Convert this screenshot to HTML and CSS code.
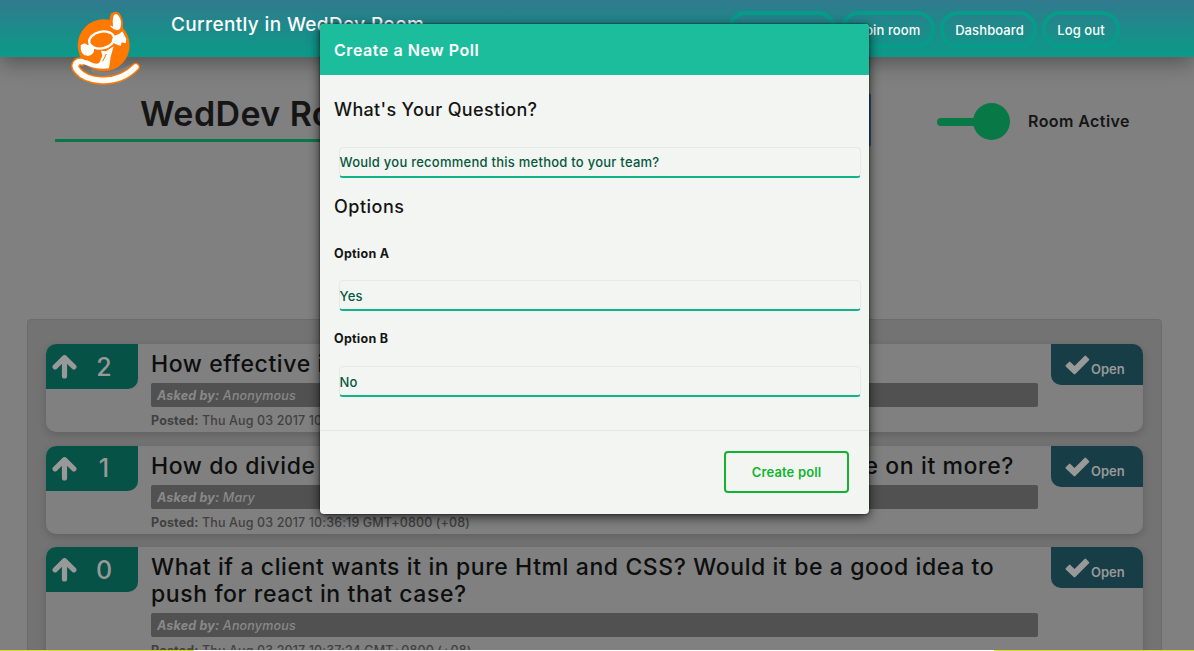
FILE: index.html
```html
<!DOCTYPE html>
<html lang="en">
<head>
<meta charset="utf-8">
<title>WedDev Room</title>
<link rel="stylesheet" href="styles.css">
</head>
<body>
<svg class="defs" width="0" height="0">
  <symbol id="arrow" viewBox="0 0 24 24"><path d="M12 3.500 21 12.300M12 3.500 3 12.300M12 5V21" fill="none" stroke="currentColor" stroke-width="5" stroke-linecap="round" stroke-linejoin="round"/></symbol>
  <symbol id="check" viewBox="0 0 25 20"><path d="M.7 10.2 4 6.9Q4.7 6.2 5.4 6.9L9.5 11 19.5 1Q20.300 .2 21.100 1L24 3.900Q24.700 4.600 24 5.300L10.300 19Q9.500 19.800 8.700 19L.7 11.400Q.2 10.800 .7 10.200Z" fill="currentColor"/></symbol>
</svg>
<header class="topbar">
  <svg class="logo" viewBox="0 0 270 270">
    <circle cx="131" cy="121" r="78" fill="#ff7800"/>
    <path d="M149 38Q151 20 167 20 181 21 187 43 192 64 184 80L165 82 148 68Z" fill="#ff7800"/>
    <path d="M95 190Q120 206 161 198 195 190 211 176L194 205Q145 228 94 202Z" fill="#808080"/>
    <path d="M66 170C50 167 38 181 53 197 66 213 92 224 123 226 166 228 198 216 227 186" fill="none" stroke="#ff7800" stroke-width="26" stroke-linecap="round"/>
    <path d="M70 172Q100 204 150 196L165 160 90 160Z" fill="#ff7800"/>
    <path d="M66 170C50 167 38 181 53 197 66 213 92 224 123 226 166 228 198 216 227 186" fill="none" stroke="#fff" stroke-width="17" stroke-linecap="round"/>
    <path d="M64 166Q80 162 92 171 108 180 118 173L127 152 123 137 138 139 161 124Q149 158 147 190 118 194 94 186L72 178Z" fill="#fff"/>
    <path d="M128 169 139 147" stroke="#ff7800" stroke-width="3"/>
    <ellipse cx="125" cy="105" rx="38" ry="25" transform="rotate(-12 125 105)" fill="none" stroke="#fff" stroke-width="7"/>
    <path d="M97 111 104 101 98 99 117 91 125 96 154 87 150 96 155 100 144 109 126 112 117 119 109 114Z" fill="#ff7800"/>
    <path d="M62 121Q75 110 82 120 99 116 102 126 105 150 84 153 60 153 62 121Z" fill="#fff"/>
    <path d="M160 94 177 87 187 79 199 102 197 115 185 112 182 123 164 116 155 108Z" fill="#fff"/>
    <path d="M149 60 159 65Q155 29 167 27 179 29 183 51 184 72 174 76 157 75 149 60Z" fill="#fff"/>
  </svg>
  <div class="room-label">Currently in WedDev Room</div>
  <nav class="nav">
    <a class="n1">Create room</a><a class="n2">Join room</a><a class="n3">Dashboard</a><a class="n4">Log out</a>
  </nav>
</header>
<section class="room-head">
  <h1 class="room-title">WedDev Room</h1>
  <span class="blue-button"></span>
  <div class="toggle"><i class="track"></i><i class="knob"></i></div>
  <div class="active-label">Room Active</div>
</section>
<main class="board">
  <article class="card">
    <div class="votes"><svg><use href="#arrow"/></svg><span>2</span></div>
    <div class="body"><h2>How effective is</h2><p class="asker"><b>Asked by:</b> Anonymous</p><p class="posted"><b>Posted:</b> Thu Aug 03 2017 10:35:42 GMT+0800 (+08)</p></div>
    <div class="status"><svg><use href="#check"/></svg><span>Open</span></div>
  </article>
  <article class="card">
    <div class="votes"><svg><use href="#arrow"/></svg><span>1</span></div>
    <div class="body"><h2 class="split"><span>How do divide time</span><span>to concentrate on it more?</span></h2><p class="asker"><b>Asked by:</b> Mary</p><p class="posted"><b>Posted:</b> Thu Aug 03 2017 10:36:19 GMT+0800 (+08)</p></div>
    <div class="status"><svg><use href="#check"/></svg><span>Open</span></div>
  </article>
  <article class="card">
    <div class="votes"><svg><use href="#arrow"/></svg><span>0</span></div>
    <div class="body"><h2>What if a client wants it in pure Html and CSS? Would it be a good idea to<br>push for react in that case?</h2><p class="asker"><b>Asked by:</b> Anonymous</p><p class="posted"><b>Posted:</b> Thu Aug 03 2017 10:37:24 GMT+0800 (+08)</p></div>
    <div class="status"><svg><use href="#check"/></svg><span>Open</span></div>
  </article>
</main>
<div class="bottom-line"></div>
<div class="modal">
  <div class="modal-head">Create a New Poll</div>
  <div class="modal-body">
    <h3 class="question-head">What's Your Question?</h3>
    <div class="field question-field">Would you recommend this method to your team?</div>
    <h3 class="options-head">Options</h3>
    <div class="option-label">Option A</div>
    <div class="field">Yes</div>
    <div class="option-label">Option B</div>
    <div class="field">No</div>
  </div>
  <div class="modal-foot"><button class="create">Create poll</button></div>
</div>
</body>
</html>
```
FILE: styles.css
```css
* { box-sizing: border-box; }
body { margin: 0; width: 1194px; height: 651px; overflow: hidden; position: relative; background: #808080; color: #151515; font-family: Inter, "Liberation Sans", sans-serif; }
h1, h2, h3, p { margin: 0; font-weight: 500; }
.defs { position: absolute; }
.topbar { position: relative; height: 57px; display: flex; justify-content: space-between; padding-left: 171px; padding-right: 74px; background: linear-gradient(#307a8d, #0a9b88); box-shadow: 0 5px 22px rgba(0,0,0,.38); }
.logo { position: absolute; left: 60px; top: 5px; width: 90px; height: 90px; }
.room-label { padding-top: 13px; font-size: 19px; line-height: 24px; font-weight: 550; letter-spacing: .36px; color: #fff; white-space: nowrap; }
.nav { display: flex; gap: 5px; padding-top: 11px; }
.nav a { height: 37px; border: 4px solid #079c8a; border-radius: 18px; color: #fff; font-size: 13px; font-weight: 500; line-height: 30px; letter-spacing: .1px; text-align: center; white-space: nowrap; }
.n1 { width: 108px; } .n2 { width: 94px; padding-left: 2px; } .n3 { width: 97px; padding-left: 2px; } .n4 { width: 78px; }
.room-head { display: flex; height: 262px; padding: 36px 0 0 55px; }
.room-title { width: 500px; height: 49px; border-bottom: 3px solid #087846; padding-left: 85px; font-size: 34px; line-height: 42px; font-weight: 600; letter-spacing: .4px; }
.blue-button { width: 116px; height: 54px; margin-left: 200px; background: #2d4f70; border-radius: 3px; }
.toggle { display: flex; align-items: center; width: 73px; height: 37px; margin: 10px 0 0 66px; }
.track { width: 46px; height: 8px; border-radius: 4px; background: #087846; }
.knob { width: 37px; height: 37px; margin-left: -10px; border-radius: 50%; background: #087846; }
.active-label { margin: 16px 0 0 18px; font-size: 16px; line-height: 24px; font-weight: 600; letter-spacing: .42px; white-space: nowrap; }
.board { margin: 0 32px 0 27px; height: 340px; padding: 24px 18px 0 18px; border: 1px solid #6c6c6c; border-radius: 4px; background: #737373; display: flex; flex-direction: column; gap: 13.500px; }
.card { display: flex; flex: none; height: 88px; border-radius: 10px; background: #808080; box-shadow: 0 3px 9px rgba(0,0,0,.16); }
.card:last-child { height: 116px; }
.votes { width: 92px; height: 45px; border-radius: 10px 0 10px 0; background: #075247; color: #999; display: flex; align-items: center; padding-left: 6px; }
.votes svg { width: 25px; height: 25px; }
.votes span { width: 54px; text-align: center; font-size: 25px; font-weight: 500; }
.body { width: 900px; padding: 7px 0 0 13px; white-space: nowrap; }
.body h2 { font-size: 23px; line-height: 27px; letter-spacing: .6px; color: #0d0e0e; }
.split { display: flex; justify-content: space-between; width: 863px; }
.asker { width: 887px; height: 24px; margin-top: 5px; padding-left: 6px; border-radius: 2px; background: #515151; color: #898989; font-size: 12.500px; line-height: 25px; letter-spacing: .18px; font-style: italic; font-weight: 500; }
.asker b, .posted b { font-weight: 700; }
.posted { margin-top: 4px; font-size: 12.500px; line-height: 19px; letter-spacing: .13px; color: #404040; }
.status { width: 92px; height: 41px; margin-left: auto; border-radius: 0 10px 0 10px; background: #173d47; color: #999; display: flex; padding: 11px 0 0 14px; }
.status svg { width: 25px; height: 20px; flex: none; }
.status span { margin: 4px 0 0 1px; font-size: 13px; line-height: 20px; font-weight: 600; }
.bottom-line { position: absolute; left: 0; top: 650px; width: 1194px; height: 1px; background: linear-gradient(90deg, #dede20 194px, #fff 194px 994px, #dede20 994px); }
.modal { position: absolute; left: 320px; top: 24px; width: 549px; height: 490px; border-radius: 4px; background: #f3f5f2; box-shadow: 0 3px 12px rgba(0,0,0,.7), 0 0 2px rgba(0,0,0,.8); overflow: hidden; white-space: nowrap; }
.modal-head { height: 51px; padding-left: 14px; background: #1cbd9c; color: #fff; font-size: 16px; line-height: 52px; font-weight: 600; letter-spacing: .55px; }
.modal-body { height: 356px; padding: 23px 8px 0 14px; border-bottom: 1px solid #e4e6e3; }
.modal-body h3 { font-size: 18px; line-height: 24px; letter-spacing: .33px; }
.field { height: 31px; margin-left: 5px; border: 1px solid #e7e9e6; border-bottom: 2px solid #12b28b; border-radius: 4px; color: #07583f; font-size: 13px; line-height: 30px; font-weight: 550; letter-spacing: .25px; text-indent: -.5px; }
.question-field { margin-top: 25px; line-height: 29px; }
.modal-body .options-head { margin-top: 17px; letter-spacing: .5px; }
.option-label { padding: 18px 0 17px; font-size: 12.500px; line-height: 20px; font-weight: 700; letter-spacing: .25px; }
.options-head + .option-label { padding: 25px 0 16px; }
.modal-foot { height: 83px; display: flex; justify-content: flex-end; padding: 20px 20px 0 0; }
.create { width: 125px; height: 42px; border: 2px solid #10b52f; border-radius: 4px; background: transparent; color: #10b52f; font-family: inherit; font-size: 13px; font-weight: 600; letter-spacing: .15px; padding: 0; }
```
